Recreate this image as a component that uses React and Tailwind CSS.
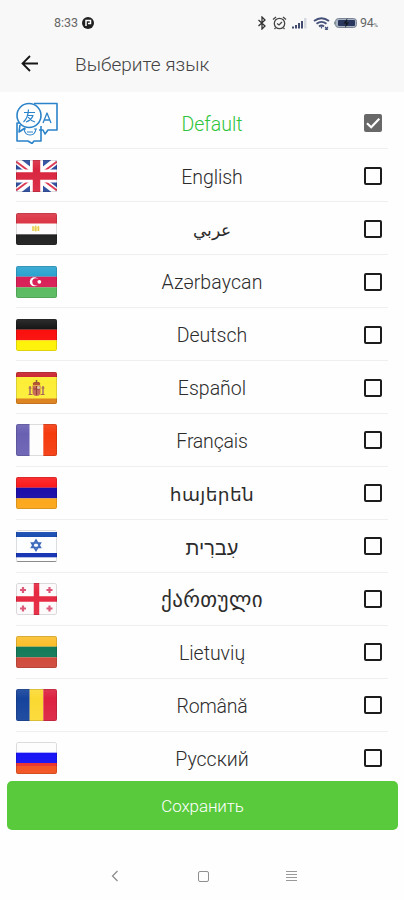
import React, { useState } from 'react';

// --- FLAGS (all drawn on a 41x32 canvas) ---
const stripes = (colors) =>
  colors.map((c, i) => (
    <rect key={i} x="0" y={(i * 32) / colors.length} width="41" height={32 / colors.length + 0.1} fill={c} />
  ));

const columns = (colors) =>
  colors.map((c, i) => (
    <rect key={i} x={(i * 41) / 3} y="0" width={41 / 3 + 0.1} height="32" fill={c} />
  ));

const flags = {
  en: (
    <>
      <rect width="41" height="32" fill="#2a4a9c" />
      <path d="M0 0 41 32M41 0 0 32" stroke="#fff" strokeWidth="7" />
      <path d="M0 1.5 14 12M27 20 41 30.5M41 1.5 27 12M14 20 0 30.5" stroke="#dc3550" strokeWidth="2" />
      <path d="M20.5 0V32M0 16H41" stroke="#fff" strokeWidth="13" />
      <path d="M20.5 0V32M0 16H41" stroke="#d92640" strokeWidth="7.5" />
    </>
  ),
  ar: (
    <>
      {stripes(['#dc3545', '#fdfbfb', '#1b1b1b'])}
      <path d="M16 13.5h7.5v4.5H16z" fill="#f3e38c" />
      <path d="M17 13v5M19.7 12.5v6M22.5 13v5" stroke="#e5c84c" strokeWidth="1" />
    </>
  ),
  az: (
    <>
      {stripes(['#2ba3cf', '#d81e56', '#55b95c'])}
      <circle cx="18.3" cy="15.8" r="4.5" fill="#fff" />
      <circle cx="19.9" cy="15.8" r="3.6" fill="#d81e56" />
      <circle cx="23.3" cy="15.8" r="1.9" fill="#fff" />
    </>
  ),
  de: stripes(['#171717', '#fa0f0c', '#fff200']),
  es: (
    <>
      <rect width="41" height="32" fill="#fcee37" />
      <rect width="41" height="5" fill="#c9202b" />
      <rect y="26.5" width="41" height="5.5" fill="#dc7d16" />
      <path d="M14 14v9M27 14v9" stroke="#b98a5c" strokeWidth="2" />
      <path d="M12.5 22.5h4M24.5 22.5h4M12.5 16h3M25.5 16h3" stroke="#ad6048" />
      <path d="M16.5 13.5h8V20q0 4-4 4t-4-4z" fill="#c56a55" />
      <path d="M17 13q-1-2 1-3h5q2 1 1 3z" fill="#b65435" />
      <path d="M20.5 8v3" stroke="#8b5a35" strokeWidth="1.5" />
      <path d="M17.5 17h6M20.5 14v9" stroke="#8f3b36" strokeWidth="1" />
      <circle cx="22.5" cy="15.5" r="1.5" fill="#dfc6a0" />
    </>
  ),
  fr: columns(['#6960b3', '#fdfdfd', '#f53a0e']),
  hy: stripes(['#fb1b1c', '#1a0da8', '#fca516']),
  he: (
    <>
      <rect width="41" height="32" fill="#fdfeff" />
      <rect y="2" width="41" height="5" fill="#1248b0" />
      <rect y="23" width="41" height="4.3" fill="#0f2fb2" />
      <path d="M20 10 24.5 17.5H15.5zM20 20.5 15.5 13h9z" fill="none" stroke="#3b69bb" strokeWidth="1.5" />
      <rect y="31" width="41" height="1" fill="#9b9b9b" />
    </>
  ),
  ka: (
    <>
      <rect width="41" height="32" fill="#fcfafa" />
      <path d="M20.5 0V32M0 16H41" stroke="#e52740" strokeWidth="5.5" />
      <path
        d="M7 4v6M4 7h6M33.5 4v6M30.5 7h6M7 22.5v6M4 25.5h6M33.5 22.5v6M30.5 25.5h6"
        stroke="#dc5275"
        strokeWidth="2.2"
      />
    </>
  ),
  lt: stripes(['#fabf2c', '#127a58', '#ce4637']),
  ro: columns(['#15439c', '#fbd932', '#dc2240']),
  ru: (
    <>
      {stripes(['#fdfdfd', '#1713f4', '#f2501b'])}
      <rect y="21" width="41" height="3" fill="#e9302c" />
    </>
  ),
};

const Flag = ({ code }) => (
  <svg viewBox="0 0 41 32" className="h-8 w-[41px] rounded-[2px]">
    <defs>
      <linearGradient id={`gloss-${code}`} x1="0" y1="0" x2="0" y2="1">
        <stop offset="0" stopColor="#fff" stopOpacity="0.1" />
        <stop offset="0.3" stopColor="#fff" stopOpacity="0" />
        <stop offset="1" stopColor="#fff" stopOpacity="0.06" />
      </linearGradient>
    </defs>
    {flags[code]}
    <rect width="41" height="32" fill={`url(#gloss-${code})`} />
    <rect x="0.5" y="0.5" width="40" height="31" rx="1.5" fill="none" stroke="#000" strokeOpacity="0.13" />
  </svg>
);

const TranslateIcon = () => (
  <svg
    viewBox="0 0 42 42"
    className="h-[42px] w-[42px]"
    fill="none"
    stroke="#2b83c9"
    strokeWidth="1.6"
    strokeLinejoin="round"
  >
    <path d="M18 1.5H41V28H32L29 32 27 28H23" />
    <path d="M3 21H1V39H12L16 41.5 18 39H25V24" />
    <circle cx="13" cy="13.5" r="12" />
    <path d="M4 23 3 30 9 26" />
    <path d="M27 21 31 11 35 21M28.5 18H33.5" strokeWidth="1.3" />
    <path d="M8 10.5H19M12.5 7.5Q12 16 7.5 20M11 13.5H17Q15.5 18 10 20M12 15Q15 19 19 20" strokeWidth="1.2" />
    <path d="M8 27Q9 33 14 33T20 27M7 27H10M18 27H21M11 30H17" strokeWidth="1.1" />
  </svg>
);

// --- LIST DATA ---
const languages = [
  { code: 'default', label: 'Default', style: 'text-[19.5px] font-light' },
  { code: 'en', label: 'English', style: 'text-[19.5px] tracking-[-0.1px] font-light' },
  { code: 'ar', label: 'عربي', style: 'text-[17px] font-light' },
  { code: 'az', label: 'Azərbaycan', style: 'text-[19.5px] tracking-[0.1px] font-light' },
  { code: 'de', label: 'Deutsch', style: 'text-[19.5px] font-light' },
  { code: 'es', label: 'Español', style: 'text-[19.5px] font-light' },
  { code: 'fr', label: 'Français', style: 'text-[19.5px] tracking-[-0.2px] font-light' },
  { code: 'hy', label: 'հայերեն', style: 'text-[18.5px] tracking-[0.4px]' },
  { code: 'he', label: 'עִברִית', style: 'text-[20px] font-light' },
  { code: 'ka', label: 'ქართული', style: 'text-[21px] tracking-[0.4px]' },
  { code: 'lt', label: 'Lietuvių', style: 'text-[19.5px] font-light' },
  { code: 'ro', label: 'Română', style: 'text-[19.5px] tracking-[-0.2px] font-light' },
  { code: 'ru', label: 'Русский', style: 'text-[19.5px] font-light' },
];

const Checkbox = ({ checked }) =>
  checked ? (
    <svg viewBox="0 0 18 18" className="h-[18px] w-[18px]">
      <rect width="18" height="18" rx="2" fill="#686868" />
      <path d="M3 9.2 7.2 13.3 15.3 4.8" fill="none" stroke="#fff" strokeWidth="2.2" />
    </svg>
  ) : (
    <span className="block h-[18px] w-[18px] rounded-[2px] border-2 border-[#1c1c1c]" />
  );

const LanguageRow = ({ lang, checked, onSelect }) => (
  <button
    onClick={() => onSelect(lang.code)}
    className="grid h-[52.93px] w-full shrink-0 grid-cols-[41px_1fr_18px] items-center pr-[22px] pl-4"
  >
    {lang.code === 'default' ? <TranslateIcon /> : <Flag code={lang.code} />}
    <span
      className={`pt-[3px] pl-[3px] text-center leading-none whitespace-nowrap ${lang.style} ${
        checked ? 'text-[#2fc43b]' : 'text-[#2c2c2c]'
      }`}
    >
      {lang.label}
    </span>
    <Checkbox checked={checked} />
  </button>
);

const StatusBar = () => (
  <div className="flex h-[46px] items-center justify-between pr-[26px] pl-[54px] text-[#666]">
    <div className="flex items-center gap-[4px]">
      <span className="text-[12.5px] leading-none">8:33</span>
      <svg viewBox="0 0 12 12" className="h-3 w-3">
        <circle cx="6" cy="6" r="6" fill="#202020" />
        <path d="M4 9V3.5H8.5V6.5H6" fill="none" stroke="#fff" strokeWidth="1.5" />
      </svg>
    </div>
    <div className="flex items-center">
      <svg viewBox="0 0 10 14" className="mr-[5px] h-3.5 w-[10px]" fill="none" stroke="#333" strokeWidth="1.3">
        <path d="M1.5 4 8 10 5 13V1L8 4 1.5 10" />
      </svg>
      <svg viewBox="0 0 15 14" className="mr-[5px] h-3.5 w-[15px]" fill="none" stroke="#444" strokeWidth="1.3">
        <circle cx="7.5" cy="7.5" r="5.2" />
        <path d="M1 3.5 4 1M14 3.5 11 1M5 7.5 7 9 10 6M3.5 12 2.5 13M11.5 12 12.5 13" />
      </svg>
      <svg viewBox="0 0 15 12" className="mr-[6px] h-3 w-[15px]">
        <path d="M0 9.5h2v2H0zM3 8h2v3.5H3zM6 6h2v5.5H6zM9 4h2v7.5H9z" fill="#414b70" />
        <path d="M12 1h2.5v10.5H12z" fill="#d5d8df" />
      </svg>
      <svg viewBox="0 0 17 13" className="mr-[4px] h-[13px] w-[17px]" fill="none" stroke="#46517a" strokeWidth="1.9">
        <path d="M1 4Q8.5-1.5 16 4M3.5 6.8Q8.5 3 13.5 6.8M6 9.5Q8.5 7.5 11 9.5" />
        <path d="M8.5 9.5v2M12 10l3 2.5M15 10l-3 2.5" strokeWidth="1.2" />
      </svg>
      <svg viewBox="0 0 23 10" className="mr-[3px] h-[10px] w-[23px]">
        <rect x="1.5" y="0.5" width="21" height="9" rx="3" fill="#a9b4c3" stroke="#7a8494" />
        <rect x="4" y="2" width="17" height="6" rx="1" fill="#29365e" />
        <path d="M0 3.5h1.5v3H0z" fill="#899" />
        <path d="M13.5 0 9.5 5.5H12L11 10 15 4.5H12.5z" fill="#111820" />
      </svg>
      <span className="text-[12.5px] leading-none tracking-[-0.2px]">94</span>
      <span className="pt-1 text-[6px] leading-none">%</span>
    </div>
  </div>
);

const App = () => {
  const [selected, setSelected] = useState('default');

  return (
    <div className="flex h-[900px] w-[404px] flex-col overflow-hidden bg-[#fefefe] font-[Roboto,'DejaVu_Sans',sans-serif]">
      <header className="h-[92px] shrink-0 bg-[#f8f8f8]">
        <StatusBar />
        <div className="flex items-center pt-[4px] pl-[21px]">
          <svg viewBox="0 0 17 17" className="h-[17px] w-[17px]" fill="none" stroke="#161616" strokeWidth="1.8">
            <path d="M9 1 1.5 8.5 9 16M1.5 8.5H17" />
          </svg>
          <h1 className="pt-[3px] pl-[37px] text-[19px] leading-6 font-light text-[#444]">Выберите язык</h1>
        </div>
      </header>

      {/* Language list, last row runs under the save button */}
      <main className="h-[689px] shrink-0 overflow-hidden pt-[4.5px]">
        {languages.map((lang, i) => (
          <React.Fragment key={lang.code}>
            {i > 0 && <div className="-mt-px mr-4 ml-4 h-px bg-[#efefef]" />}
            <LanguageRow lang={lang} checked={selected === lang.code} onSelect={setSelected} />
          </React.Fragment>
        ))}
      </main>

      <button className="mr-[6px] ml-[7px] h-[49px] shrink-0 rounded-[5px] bg-[#59ca3c] pt-[3px] text-[17px] font-light tracking-[-0.1px] text-white">
        Сохранить
      </button>

      <nav className="grid h-[70px] grid-cols-3 items-center pt-[22px] pr-[69px] pl-[71px]">
        <svg viewBox="0 0 8 12" className="h-3 w-2 justify-self-center" fill="none" stroke="#8a8a8a" strokeWidth="1.2">
          <path d="M6.5 1 1.5 6 6.5 11" />
        </svg>
        <span className="h-[11px] w-[11px] justify-self-center rounded-[2px] border border-[#8f8f8f]" />
        <span className="flex h-[10px] w-[11px] flex-col justify-between justify-self-center">
          <span className="h-px bg-[#999]" />
          <span className="h-px bg-[#999]" />
          <span className="h-px bg-[#999]" />
          <span className="h-px bg-[#999]" />
        </span>
      </nav>
    </div>
  );
};

export default App;
